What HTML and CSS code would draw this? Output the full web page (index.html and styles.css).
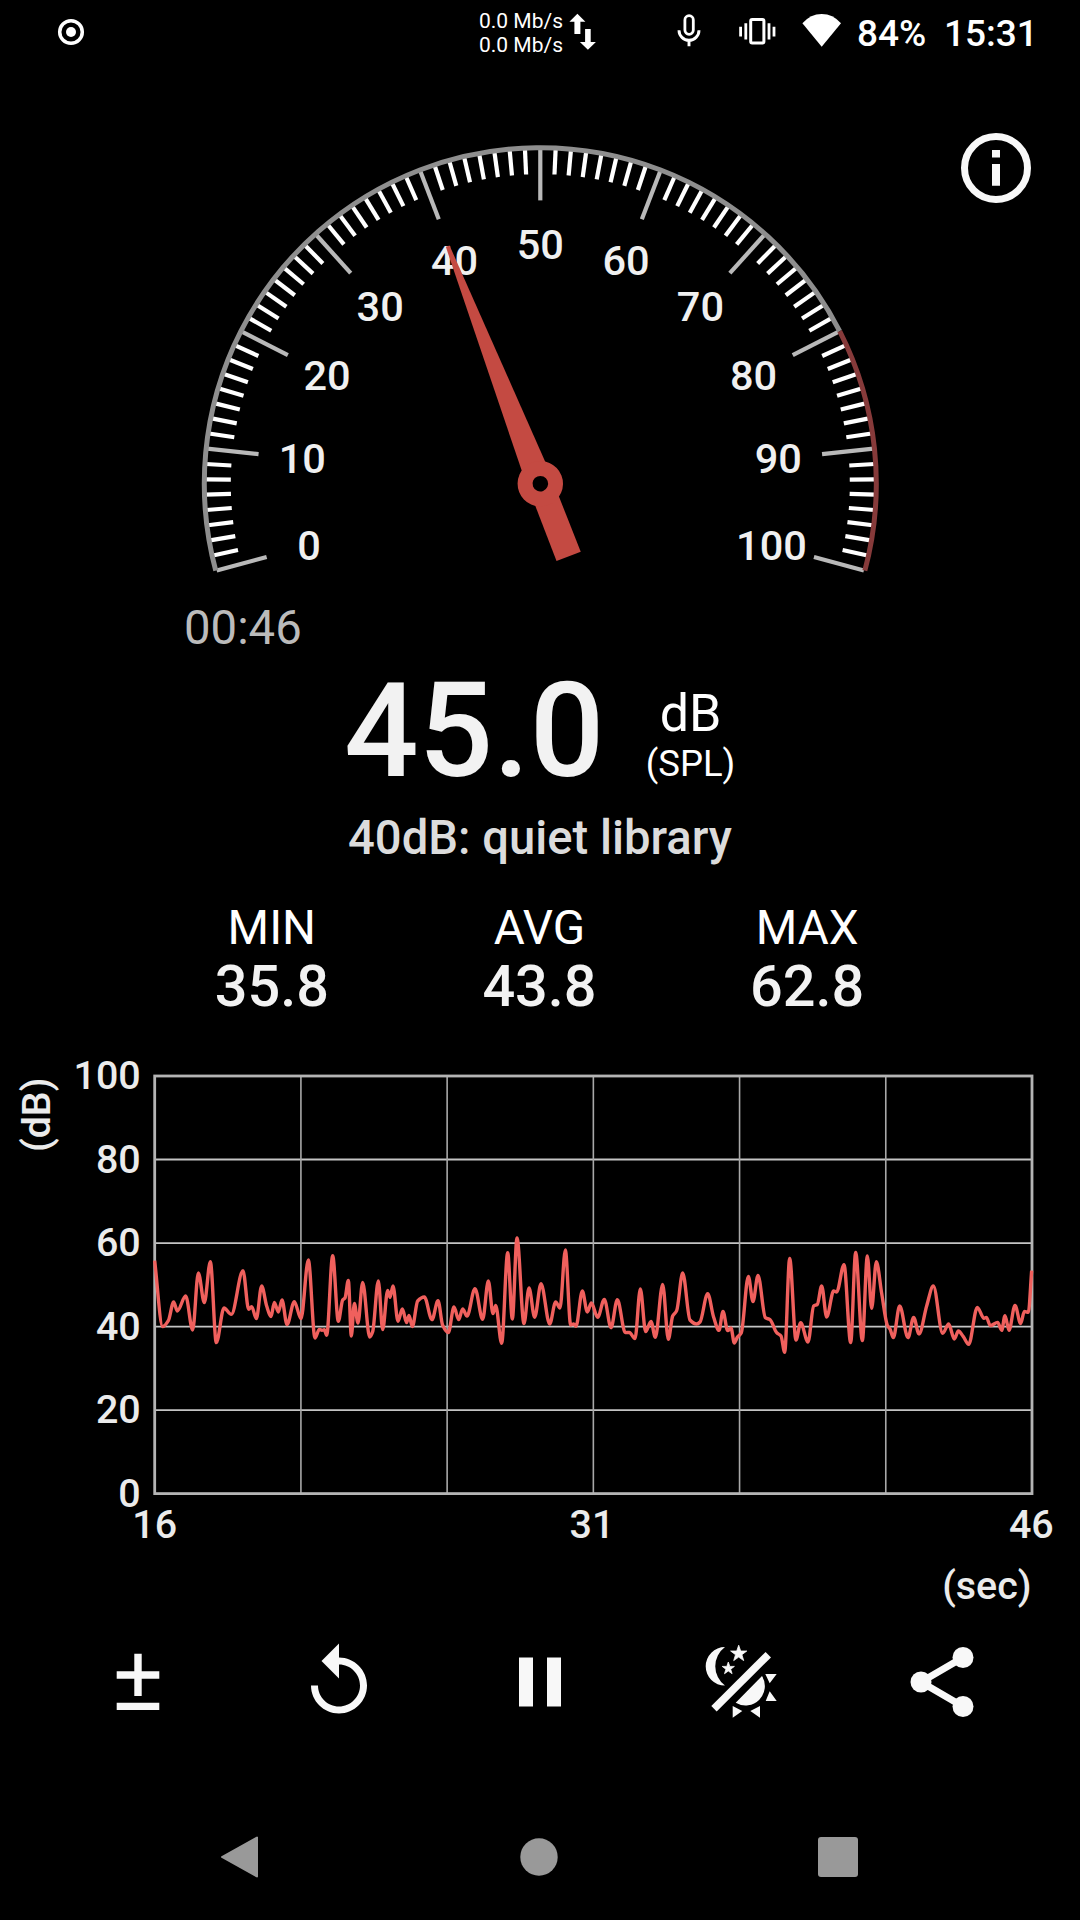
FILE: index.html
```
<!DOCTYPE html>
<html lang="en">
<head>
    <meta charset="UTF-8">
    <meta name="viewport" content="width=device-width, initial-scale=1.0">
    <title>Sound Meter</title>
    <link rel="stylesheet" href="styles.css">
</head>
<body>
    <div class="status-bar">
        <svg class="record-icon" width="28" height="28" viewBox="0 0 28 28">
            <circle cx="14" cy="14" r="11.3" fill="none" stroke="#fff" stroke-width="3.5" />
            <circle cx="14" cy="14" r="5" fill="#fff" />
        </svg>
        <div class="net-speed">
            <span>0.0 Mb/s</span>
            <span>0.0 Mb/s</span>
        </div>
        <svg class="arrows-icon" width="28" height="40" viewBox="569 12 28 40" fill="#fff">
            <path d="M577.4 13.7l8 8h-5V34h-6V21.7h-5z" />
            <path d="M587.9 49.7l8-7.7h-5.2V29h-5.6v13h-5.2z" />
        </svg>
        <svg class="mic-icon" width="26" height="34" viewBox="675.5 13 26 34" fill="none" stroke="#fff">
            <rect x="684.4" y="15.7" width="8.4" height="18.6" rx="4.2" stroke-width="2.8" />
            <path d="M678.5 30.3a10 10 0 0 0 20 0M688.5 40v6.2" stroke-width="2.9" />
        </svg>
        <svg class="vibrate-icon" width="40" height="30" viewBox="737 16 40 30" fill="none" stroke="#fff">
            <rect x="750.7" y="19.5" width="13.2" height="23.6" rx="1.5" stroke-width="3" />
            <path d="M745.8 23.3v16.2M769 23.3v16.2M740.6 26.7v9.8M774 26.7v9.8" stroke-width="2.8" />
        </svg>
        <svg class="wifi-icon" width="40" height="34" viewBox="802 13 40 34" fill="#fff">
            <path d="M821.7 46.7L802.4 23.3Q810.5 14 821.7 14T841 23.3z" />
        </svg>
        <span class="battery">84%</span>
        <span class="clock">15:31</span>
    </div>

    <div class="gauge">
        <svg id="gauge-dial" width="1080" height="526" viewBox="0 64 1080 526">
            <g id="ticks"></g>
            <g id="gauge-labels"></g>
            <path id="arc-normal" class="arc" />
            <path id="arc-loud" class="arc loud" />
            <g class="needle" transform="translate(540.3 483.7) rotate(-21.3)">
                <path d="M-2 -255H2L12.5 -20L13 78H-13L-12.5 -20z" />
                <circle r="22.7" />
                <circle class="hole" r="7.8" />
            </g>
        </svg>
        <svg class="info-icon" width="72" height="72" viewBox="0 0 72 72">
            <circle cx="36" cy="36" r="31.5" fill="none" stroke="#f8f8f8" stroke-width="7" />
            <path d="M32 18h8v7.4h-8zM32 32h8v21.8h-8z" fill="#f8f8f8" />
        </svg>
    </div>

    <div class="timer">00:46</div>

    <div class="reading">
        <div class="value">45.0</div>
        <div class="unit">
            <div class="db">dB</div>
            <div class="spl">(SPL)</div>
        </div>
    </div>
    <div class="description">40dB: quiet library</div>

    <div class="stats">
        <div class="stat"><span>MIN</span><b>35.8</b></div>
        <div class="stat"><span>AVG</span><b>43.8</b></div>
        <div class="stat"><span>MAX</span><b>62.8</b></div>
    </div>

    <svg class="chart" width="1080" height="560" viewBox="0 1050 1080 560">
        <g id="grid"></g>
        <g id="chart-labels"></g>
        <text class="chart-text" text-anchor="end" transform="translate(50 1077.5) rotate(-90)">(dB)</text>
        <text class="chart-text" text-anchor="end" x="1031.5" y="1598.5">(sec)</text>
        <path id="trace" />
    </svg>

    <div class="toolbar">
        <button>
            <svg viewBox="96 1640 84 84"><path d="M134.3 1653.7h7.4v17.6h17.6v7.4h-17.6V1696h-7.4v-17.3h-17.6v-7.4h17.6zM116.7 1702.8h42.6v7.2h-42.6z" /></svg>
        </button>
        <button>
            <svg viewBox="0 0 24 24"><path d="M12 5V1L7 6l5 5V7c3.31 0 6 2.69 6 6s-2.69 6-6 6-6-2.69-6-6H4c0 4.42 3.58 8 8 8s8-3.58 8-8-3.58-8-8-8z" /></svg>
        </button>
        <button>
            <svg viewBox="0 0 24 24"><path d="M6 19h4V5H6v14zm8-14v14h4V5h-4z" /></svg>
        </button>
        <button>
            <svg viewBox="0 0 84 84">
                <path d="M26 7A19.3 19.3 0 0 0 26 45.6A24 24 0 0 1 26 7z" />
                <path d="M39.7 5.2l2 5.8h6.1l-4.9 3.7 1.8 5.9-5-3.5-5 3.5 1.8-5.9-4.9-3.7h6.1z" stroke="#f8f8f8" stroke-width=".8" />
                <path d="M29.3 22l1.5 4.4h4.6l-3.7 2.8 1.4 4.5-3.8-2.700-3.8 2.700 1.4-4.5-3.7-2.8h4.6z" stroke="#f8f8f8" stroke-width=".8" />
                <path d="M15 68.7L69.3 14.7" stroke="#f8f8f8" stroke-width="7.6" />
                <path d="M36.7 62.7A19.3 19.3 0 0 0 63 36z" />
                <path d="M66.3 34h11.4l-7 9.3zM70.7 51.3l7 9.7h-11zM33.7 66l9.6 5-9.6 6.7zM51.3 71l9.7-5v11.7z" />
            </svg>
        </button>
        <button>
            <svg viewBox="0 0 24 24">
                <path d="M18 5L6 12l12 7" fill="none" stroke="#f8f8f8" stroke-width="2" />
                <circle cx="18" cy="5" r="3" /><circle cx="6" cy="12" r="3" /><circle cx="18" cy="19" r="3" />
            </svg>
        </button>
    </div>

    <div class="nav-bar">
        <svg viewBox="0 0 44 44"><path d="M4 22L39 2.5v39z" stroke="#999" stroke-width="2" stroke-linejoin="round" /></svg>
        <svg viewBox="0 0 44 44"><circle cx="22" cy="22" r="18.7" /></svg>
        <svg viewBox="0 0 44 44"><rect x="2" y="2" width="40" height="40" rx="3" /></svg>
    </div>

    <script>
        const CX = 540.3;
        const CY = 483.7;

        // angle is measured clockwise from the top of the dial
        function polar(r, angle) {
            const a = angle * Math.PI / 180;
            return [CX + r * Math.sin(a), CY - r * Math.cos(a)];
        }

        function add(parent, tag, attrs, text) {
            const el = document.createElementNS("http://www.w3.org/2000/svg", tag);
            for (const key in attrs) el.setAttribute(key, attrs[key]);
            if (text !== undefined) el.textContent = text;
            document.getElementById(parent).appendChild(el);
        }

        function arc(from, to) {
            const large = to - from > 180 ? 1 : 0;
            return `M${polar(336, from)} A336 336 0 ${large} 1 ${polar(336, to)}`;
        }

        // dial: 0-100 over 210 degrees, 8 steps for each 10 dB
        for (let i = 0; i <= 80; i++) {
            const major = i % 8 === 0;
            const angle = -105 + i * 2.625;
            const [x1, y1] = polar(335, angle);
            const [x2, y2] = polar(major ? 283.3 : 309.5, angle);
            add("ticks", "line", { x1, y1, x2, y2, class: major ? "tick major" : "tick" });
            if (major) {
                const [x, y] = polar(239.3, angle);
                add("gauge-labels", "text", { x, y: y + 14.8, class: "gauge-text" }, i / 8 * 10);
            }
        }
        document.getElementById("arc-normal").setAttribute("d", arc(-105, 63));
        document.getElementById("arc-loud").setAttribute("d", arc(63, 105));

        // chart grid
        const left = 154.7, right = 1032, top_ = 1076, bottom = 1493.6;
        for (let i = 0; i <= 5; i++) {
            const y = top_ + i * (bottom - top_) / 5;
            if (i > 0 && i < 5) add("grid", "line", { x1: left, x2: right, y1: y, y2: y, class: "grid-h" });
            add("chart-labels", "text", { x: 140.7, y: y + 13.4, class: "chart-text", "text-anchor": "end" }, 100 - i * 20);
        }
        for (let i = 1; i <= 5; i++) {
            const x = left + i * (right - left) / 6;
            add("grid", "line", { x1: x, x2: x, y1: top_, y2: bottom, class: "grid-v" });
        }
        add("grid", "rect", { x: left, y: top_, width: right - left, height: bottom - top_, class: "frame" });
        [[left, 16], [592, 31], [1031.3, 46]].forEach(([x, t]) => {
            add("chart-labels", "text", { x, y: 1538.3, class: "chart-text", "text-anchor": "middle" }, t);
        });

        // level history, three units per pixel
        const samples = [
            14,122, 38,320, 55,302, 71,246, 82,273, 107,228, 128,330, 145,159, 163,248, 181,125, 199,368,
            222,264, 244,283, 279,152, 296,268, 305,260, 319,296, 335,198, 350,258, 363,290, 373,247,
            385,276, 396,240, 411,314, 433,245, 453,296, 475,120, 495,354, 508,328, 516,331, 523,329,
            530,346, 548,107, 565,304, 578,240, 585,234, 595,181, 604,348, 613,250, 624,309, 638,187,
            659,351, 668,335, 685,183, 698,329, 713,211, 720,232, 729,198, 744,304, 757,267, 770,308,
            777,286, 787,320, 803,243, 823,231, 846,299, 864,242, 878,316, 895,338, 912,261, 926,299,
            938,267, 951,288, 975,206, 998,298, 1015,183, 1029,281, 1037,256, 1055,370, 1073,98, 1087,297,
            1101,54, 1122,311, 1137,204, 1154,292, 1173,191, 1199,312, 1217,246, 1230,264, 1246,90,
            1262,315, 1271,312, 1278,319, 1297,213, 1312,276, 1324,249, 1343,292, 1363,238, 1383,323,
            1402,239, 1426,338, 1438,337, 1455,356, 1471,207, 1487,335, 1503,304, 1516,352, 1538,193,
            1555,358, 1568,288, 1580,272, 1598,159, 1620,300, 1640,312, 1650,306, 1673,221, 1691,292,
            1707,331, 1719,274, 1733,332, 1743,324, 1753,369, 1762,352, 1774,338, 1795,169, 1809,245,
            1824,166, 1846,293, 1860,299, 1880,338, 1893,348, 1904,397, 1919,115, 1938,360, 1952,308,
            1974,366, 1991,258, 2002,253, 2015,198, 2030,291, 2051,213, 2060,216, 2082,134, 2102,368,
            2117,97, 2137,362, 2152,108, 2165,265, 2179,125, 2195,220, 2212,316, 2220,327, 2230,353,
            2249,258, 2274,353, 2291,292, 2307,342, 2330,258, 2350,198, 2378,340, 2396,312, 2413,357,
            2425,333, 2440,350, 2456,373, 2482,262, 2502,295, 2509,292, 2521,317, 2543,307, 2555,331,
            2565,287, 2577,331, 2595,256, 2612,311, 2623,274, 2635,277, 2645,152
        ];
        const pts = [];
        for (let i = 0; i < samples.length; i += 2) {
            pts.push([150 + samples[i] / 3, 1220 + samples[i + 1] / 3]);
        }

        // flat at peaks and valleys, harmonic mean of the slopes elsewhere
        function slope(i) {
            if (i === 0 || i === pts.length - 1) {
                const j = i === 0 ? 0 : i - 1;
                return (pts[j + 1][1] - pts[j][1]) / (pts[j + 1][0] - pts[j][0]);
            }
            const a = (pts[i][1] - pts[i - 1][1]) / (pts[i][0] - pts[i - 1][0]);
            const b = (pts[i + 1][1] - pts[i][1]) / (pts[i + 1][0] - pts[i][0]);
            return a * b <= 0 ? 0 : 2 * a * b / (a + b);
        }

        let d = `M${pts[0]}`;
        for (let i = 1; i < pts.length; i++) {
            const [x0, y0] = pts[i - 1];
            const [x1, y1] = pts[i];
            const h = (x1 - x0) / 3;
            d += `C${x0 + h},${y0 + h * slope(i - 1)} ${x1 - h},${y1 - h * slope(i)} ${x1},${y1}`;
        }
        document.getElementById("trace").setAttribute("d", d);
    </script>
</body>
</html>
```
FILE: styles.css
```
body {
    margin: 0;
    width: 1080px;
    height: 1920px;
    background: #000;
    color: #fff;
    font-family: Roboto, "Noto Sans", sans-serif;
    overflow: hidden;
}
svg {
    display: block;
    flex: none;
}
.status-bar {
    display: flex;
    align-items: center;
    height: 64px;
    box-sizing: border-box;
    white-space: nowrap;
}
.record-icon {
    margin-left: 57px;
}
.net-speed {
    display: flex;
    flex-direction: column;
    width: 90px;
    margin-left: 394px;
    margin-top: 1px;
    font-size: 21px;
    line-height: 24px;
}
.mic-icon {
    margin-left: 78.5px;
    margin-bottom: 4px;
}
.vibrate-icon {
    margin-left: 35.5px;
    margin-bottom: 2px;
}
.wifi-icon {
    margin-left: 25px;
    margin-bottom: 4px;
}
.battery,
.clock {
    font-size: 37px;
    font-weight: 500;
    line-height: 64px;
    padding-top: 3px;
}
.battery {
    width: 87px;
    margin-left: 15px;
}
.gauge {
    position: relative;
    height: 526px;
}
.info-icon {
    position: absolute;
    left: 960px;
    top: 68px;
}
.tick {
    stroke: #fff;
    stroke-width: 4.2;
}
.tick.major {
    stroke: #b9b9b9;
}
.arc {
    fill: none;
    stroke: #8e8e8e;
    stroke-width: 5;
}
.arc.loud {
    stroke: #863a3a;
}
.gauge-text {
    fill: #f0f0f0;
    font-size: 41.5px;
    font-weight: 500;
    text-anchor: middle;
}
.needle {
    fill: #c44a42;
}
.needle .hole {
    fill: #000;
}
.timer {
    margin-top: 8px;
    padding-left: 184px;
    font-size: 47.3px;
    line-height: 60px;
    color: #bbb;
}
.reading {
    display: flex;
    height: 132px;
    margin-top: 7px;
    padding-left: 344px;
}
.reading .value {
    width: 276px;
    font-size: 131.3px;
    font-weight: 500;
    line-height: 132px;
    color: #f2f2f2;
}
.unit {
    width: 141px;
    padding-top: 23px;
    text-align: center;
}
.db {
    font-size: 52px;
    line-height: 52px;
}
.spl {
    margin-top: 6px;
    font-size: 36.5px;
    line-height: 36px;
}
.description {
    margin-top: 11px;
    font-size: 47.2px;
    font-weight: 500;
    line-height: 60px;
    text-align: center;
    color: #dcdcdc;
}
.stats {
    display: flex;
    margin: 32px 139px 0 138px;
}
.stat {
    display: flex;
    flex: 1;
    flex-direction: column;
    align-items: center;
}
.stat span {
    font-size: 47.6px;
    line-height: 56px;
}
.stat b {
    margin-top: 1px;
    font-size: 57.6px;
    font-weight: 500;
    line-height: 60px;
    color: #f2f2f2;
}
.chart {
    margin-top: 33px;
}
.grid-h {
    stroke: #c4c4c4;
    stroke-width: 1.8;
}
.grid-v {
    stroke: #a8a8a8;
    stroke-width: 1.6;
}
.frame {
    fill: none;
    stroke: #b4b4b4;
    stroke-width: 2.8;
}
.chart-text {
    fill: #ebebeb;
    font-size: 39.4px;
    font-weight: 500;
}
#trace {
    fill: none;
    stroke: #f0605d;
    stroke-width: 3.4;
    stroke-linejoin: round;
}
.toolbar {
    display: flex;
    margin: 30px 37.5px 0;
}
.toolbar button {
    display: flex;
    flex: 1;
    justify-content: center;
    padding: 0;
    border: none;
    background: none;
}
.toolbar svg {
    width: 84px;
    height: 84px;
    fill: #f8f8f8;
}
.nav-bar {
    display: flex;
    justify-content: space-between;
    margin-top: 111px;
    padding: 0 220px 0 218px;
}
.nav-bar svg {
    width: 44px;
    height: 44px;
    fill: #999;
}
```
